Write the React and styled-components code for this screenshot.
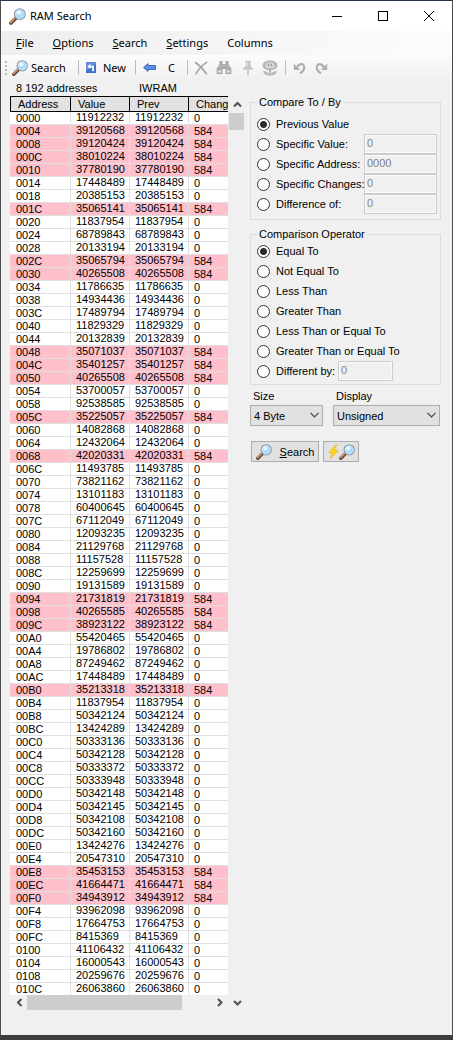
import React, { useState } from "react";
import styled, { createGlobalStyle } from "styled-components";

const GlobalStyle = createGlobalStyle`
  * { box-sizing: border-box; }
  body {
    margin: 0;
    background: #3d3d3d;
    color: #000;
    font: 11px/16px "Liberation Sans", Arial, sans-serif;
  }
  button, input, select { font: inherit; color: inherit; margin: 0; }
`;

const UI_FONT = `"Noto Sans", "Open Sans", sans-serif`;

const Window = styled.main`
  background: #f0f0f0;
  border: 1px solid #4d4d50;
  border-top-color: #26304f;
  border-bottom: 0;
  margin-bottom: 5px;
  min-height: calc(100vh - 5px);
`;

const TitleBar = styled.header`
  display: flex;
  align-items: center;
  height: 30px;
  padding-left: 8px;
  background: #fff;
  font-family: ${UI_FONT};
`;

const Title = styled.h1`
  flex: 1;
  margin: 0 0 0 4px;
  font: inherit;
`;

const CaptionButton = styled.button`
  display: flex;
  align-items: center;
  justify-content: center;
  width: 46px;
  height: 30px;
  padding: 0;
  border: 0;
  background: none;
`;

const MenuBar = styled.nav`
  display: flex;
  align-items: center;
  gap: 3px;
  height: 24px;
  padding-left: 7px;
  background: linear-gradient(90deg, #eeeeee, #fcfcfc);
`;

const MenuItem = styled.button`
  padding: 0 8px;
  border: 0;
  background: none;
  font-family: ${UI_FONT};
`;

const ToolBar = styled.div`
  display: flex;
  align-items: center;
  height: 25px;
  padding-left: 4px;
  background: linear-gradient(#fcfcfc, #f0f0f0);
`;

const Grip = styled.span`
  width: 2px;
  height: 14px;
  margin-right: 5px;
  background: repeating-linear-gradient(#b8b8b8 0 2px, transparent 2px 4px);
`;

const ToolButton = styled.button`
  display: flex;
  align-items: center;
  justify-content: ${(p) => (p.$gap ? "flex-start" : "center")};
  gap: ${(p) => p.$gap || 0}px;
  width: ${(p) => p.$width}px;
  height: 22px;
  padding: 0 0 0 ${(p) => p.$inset || 0}px;
  border: 0;
  background: none;
  font-family: ${UI_FONT};
`;

const Separator = styled.span`
  width: 1px;
  height: 15px;
  margin: 0 3px;
  background: #bdbdbd;
`;

const Body = styled.div`
  display: flex;
  align-items: flex-start;
  padding: 0 11px 25px 9px;
`;

const ListPane = styled.section`
  flex: 1;
  min-width: 0;
`;

const Status = styled.div`
  display: flex;
  height: 16px;
  padding-left: 6px;
`;

const StatusText = styled.span`
  width: ${(p) => p.$width || "auto"};
  white-space: nowrap;
`;

const ListFrame = styled.div`
  display: grid;
  grid-template-columns: minmax(0, 1fr) 16px;
`;

const ListBody = styled.div`
  overflow: hidden;
  margin-right: 1px;
  background: #fff;
`;

const Table = styled.table`
  table-layout: fixed;
  width: 260px;
  border-collapse: separate;
  border-spacing: 0;
`;

const HeadCell = styled.th`
  width: ${(p) => p.$width}px;
  height: 16px;
  padding: 0 0 0 7px;
  border: solid #000;
  border-width: 1px 1px 1px ${(p) => (p.$first ? "1px" : "0")};
  background: #e2e2e2;
  font-weight: normal;
  line-height: 13px;
  text-align: left;
`;

const Row = styled.tr`
  background: ${(p) => (p.$changed ? "#ffc0cb" : "#fff")};
  &:last-child td { height: 12px; border-bottom: 0; }
`;

const Cell = styled.td`
  height: 13px;
  padding: 0 0 0 ${(p) => (p.$wide ? 6 : 5)}px;
  border: solid #dfdfdf;
  border-width: 0 1px 1px 0;
  line-height: ${(p) => (p.$low ? 12 : 10)}px;
  vertical-align: top;
`;

const VerticalBar = styled.div`
  display: flex;
  flex-direction: column;
  align-items: flex-start;
`;

const HorizontalBar = styled.div`
  display: flex;
  align-items: center;
  height: 15px;
  padding: 0 2px 0 1px;
`;

const ScrollArrow = styled.button`
  display: flex;
  align-items: center;
  justify-content: center;
  width: 16px;
  height: ${(p) => p.$height || 15}px;
  padding: 0;
  border: 0;
  background: none;
`;

const Track = styled.div`
  flex: 1;
  width: 15px;
`;

const Thumb = styled.div`
  width: ${(p) => p.$width};
  height: ${(p) => p.$height};
  background: #cdcdcd;
`;

const HorizontalTrack = styled.div`
  flex: 1;
  height: 15px;
`;

const Options = styled.section`
  flex: 0 0 190px;
  margin: 15px 0 0 5px;
`;

const Group = styled.fieldset`
  min-width: 0;
  margin: 0;
  padding: ${(p) => p.$top}px 3px ${(p) => p.$bottom}px 6px;
  border: 1px solid #dcdcdc;
  & + & { margin-top: 7px; }
`;

const Legend = styled.legend`
  height: 14px;
  padding: 0 2px;
  line-height: 14px;
`;

const OptionRow = styled.div`
  display: flex;
  align-items: center;
  height: 20px;
`;

const RadioLabel = styled.label`
  display: flex;
  align-items: center;
  gap: 6px;
  width: ${(p) => p.$width};
  white-space: nowrap;
`;

const Radio = styled.input`
  appearance: none;
  flex: none;
  width: 13px;
  height: 13px;
  border: 1px solid #333;
  border-radius: 50%;
  background: #fff;
  &:checked { background: radial-gradient(circle, #2b2b2b 0 3px, #fff 4px); }
`;

const TextBox = styled.input`
  width: ${(p) => p.$width}px;
  height: 20px;
  padding: 0 2px 2px;
  border: 1px solid #cccccc;
  border-radius: 0;
  background: #f0f0f0;
  color: #838383;
  box-shadow: inset 0 0 0 1px #fafafa;
`;

const Fields = styled.div`
  display: grid;
  grid-template-columns: 73px 107px;
  gap: 10px;
  margin-top: 3px;
`;

const FieldLabel = styled.label`
  display: block;
  height: 17px;
  padding-left: 3px;
`;

const SelectBox = styled.div`
  position: relative;
  svg { position: absolute; right: 4px; top: 7px; pointer-events: none; }
`;

const Select = styled.select`
  appearance: none;
  width: 100%;
  height: 21px;
  padding: 0 3px;
  border: 1px solid #adadad;
  border-radius: 0;
  background: #e1e1e1;
`;

const Actions = styled.div`
  display: flex;
  gap: 4px;
  margin: 15px 0 0 1px;
`;

const ActionButton = styled.button`
  display: flex;
  align-items: center;
  justify-content: center;
  gap: ${(p) => p.$gap || 0}px;
  width: ${(p) => p.$width}px;
  height: 21px;
  padding: 0;
  border: 1px solid #adadad;
  background: #e1e1e1;
`;

const Magnifier = ({ size = 16 }) => (
  <svg width={size} height={size} viewBox="0 0 16 16" aria-hidden="true">
    <path d="M1.8 14.2 6 10" stroke="#5b4a40" strokeWidth="3.4" strokeLinecap="round" />
    <path d="M1.5 13.5 5.400 9.600" stroke="#d39a70" strokeWidth="1.700" strokeLinecap="round" />
    <circle cx="10.2" cy="5.8" r="5" fill="#a9dcfa" stroke="#7f93ad" strokeWidth="1.2" />
    <circle cx="10.2" cy="5.8" r="4.2" fill="none" stroke="#dceaf5" strokeWidth=".8" />
    <ellipse cx="9.2" cy="4.4" rx="2.4" ry="1.8" fill="#e8f8ff" />
  </svg>
);

const Bolt = () => (
  <svg width="11" height="15" viewBox="0 0 11 15" aria-hidden="true">
    <path d="M8.6.6 1 8.4l4 .4L2.4 14.2 10 6.8l-3.8-.6z" fill="#ffe01a" stroke="#f2b705" strokeWidth=".9" />
  </svg>
);

const NewIcon = () => (
  <svg width="10" height="11" viewBox="0 0 10 11" aria-hidden="true">
    <rect width="10" height="11" fill="#3f72cf" />
    <path d="M0 0h10v2L0 9z" fill="#7da4e8" opacity=".5" />
    <path d="M1.400 4.500 4.400 1.800v1.900H8V9.200H6.200V5.500H4.400v1.800z" fill="#fff" />
  </svg>
);

const BackArrow = () => (
  <svg width="13" height="9" viewBox="0 0 13 9" aria-hidden="true">
    <path d="M.6 4.5 5 .6v2h7.4v3.8H5v2z" fill="#5e93ea" stroke="#2c57b0" strokeWidth=".9" />
  </svg>
);

const Cross = () => (
  <svg width="14" height="14" viewBox="0 0 14 14" fill="none" stroke="#a3a3a3" strokeLinecap="round" aria-hidden="true">
    <path d="M1.6 1.6C5 4 9 8.400 12.400 12.800" strokeWidth="1.8" />
    <path d="M12.800 1.200C8.500 4 4.500 8.500 1.800 12.800" strokeWidth="1.5" />
  </svg>
);

const Binoculars = () => (
  <svg width="16" height="15" viewBox="0 0 16 15" aria-hidden="true">
    <path d="M3.500 1h3v3h3V1h3v3l2.800 4.500V14H9.500V9h-3v5H.7V8.500L3.500 4z" fill="#a9a9a9" />
    <path d="M2.500 10.500h2.400v1.800H2.500zM11.100 10.500h2.400v1.800h-2.400zM4.500 5l-1.500 3M11.500 5l1.500 3M7 6h2" fill="#dedede" stroke="#dedede" strokeWidth=".7" />
  </svg>
);

const Pin = () => (
  <svg width="12" height="16" viewBox="0 0 12 16" aria-hidden="true">
    <path d="M3 .8h6.200l-.7 2.200v3l2.500 2.400v1.400H1.200V8.400L3.700 6V3z" fill="#c6c6c6" />
    <path d="M6 9.500V15" stroke="#c4c4c4" strokeWidth="1.600" />
    <path d="M5.200 2v5" stroke="#e4e4e4" />
  </svg>
);

const Flower = () => (
  <svg width="16" height="16" viewBox="0 0 16 16" aria-hidden="true">
    <ellipse cx="8" cy="5.400" rx="7.400" ry="5" fill="#b5b5b5" />
    <ellipse cx="8" cy="5.400" rx="4.800" ry="3.200" fill="#d4d4d4" />
    <path d="M6.500 3.800v2.200M9.500 3.800v2.200" stroke="#8c8c8c" />
    <path d="M8 10v5.500" stroke="#a8a8a8" strokeWidth="1.600" />
    <path d="M7.600 15.500C4 15.500 1.500 14 1 11c3.500 0 6 1.500 6.600 4.500M8.400 15.500C12 15.500 14.500 14 15 11c-3.500 0-6 1.500-6.600 4.500" fill="#b8b8b8" />
  </svg>
);

const Undo = ({ flip }) => (
  <svg width="13" height="14" viewBox="0 0 13 14" aria-hidden="true">
    <g transform={flip ? "matrix(-1 0 0 1 13 0)" : undefined}>
      <path d="M4 6.500C6 2.500 10.800 1.800 11.200 6c.2 2.500-1.600 4.800-4.200 6.400" fill="none" stroke="#b0b0b0" strokeWidth="2.200" />
      <path d="M.8 2.500V9h6.400z" fill="#b0b0b0" />
    </g>
  </svg>
);

const CHEVRONS = {
  up: "M1 6.500 4.500 3 8 6.500",
  down: "M1 3 4.500 6.500 8 3",
  left: "M6.500 1 3 4.500 6.500 8",
  right: "M3 1 6.500 4.500 3 8",
};

const Chevron = ({ dir }) => (
  <svg width="9" height="9" viewBox="0 0 9 9" fill="none" stroke="#505050" strokeWidth="2" aria-hidden="true">
    <path d={CHEVRONS[dir]} />
  </svg>
);

const SelectArrow = () => (
  <svg width="9" height="6" viewBox="0 0 9 6" fill="none" stroke="#444" strokeWidth="1.200" aria-hidden="true">
    <path d="M.5.8 4.500 4.800 8.500.8" />
  </svg>
);

const VALUES = `
11912232 39120568 39120424 38010224 37780190 17448489 20385153 35065141
11837954 68789843 20133194 35065794 40265508 11786635 14934436 17489794
11829329 20132839 35071037 35401257 40265508 53700057 92538585 35225057
14082868 12432064 42020331 11493785 73821162 13101183 60400645 67112049
12093235 21129768 11157528 12259699 19131589 21731819 40265585 38923122
55420465 19786802 87249462 17448489 35213318 11837954 50342124 13424289
50333136 50342128 50333372 50333948 50342148 50342145 50342108 50342160
13424276 20547310 35453153 41664471 34943912 93962098 17664753 8415369
41106432 16000543 20259676 26063860`.trim().split(/\s+/);

const CHANGED = new Set([
  0x04, 0x08, 0x0c, 0x10, 0x1c, 0x2c, 0x30, 0x48, 0x4c, 0x50,
  0x5c, 0x68, 0x94, 0x98, 0x9c, 0xb0, 0xe8, 0xec, 0xf0,
]);

const ROWS = VALUES.map((value, i) => ({
  address: (i * 4).toString(16).toUpperCase().padStart(4, "0"),
  value,
  changed: CHANGED.has(i * 4),
}));

const COMPARE = [
  { name: "Previous Value" },
  { name: "Specific Value:", value: "0" },
  { name: "Specific Address:", value: "0000" },
  { name: "Specific Changes:", value: "0" },
  { name: "Difference of:", value: "0" },
];

const OPERATORS = [
  "Equal To", "Not Equal To", "Less Than", "Greater Than",
  "Less Than or Equal To", "Greater Than or Equal To", "Different by:",
];

const Mnemonic = ({ text }) => (
  <span><u>{text[0]}</u>{text.slice(1)}</span>
);

export default function App() {
  const [compare, setCompare] = useState("Previous Value");
  const [operator, setOperator] = useState("Equal To");

  return (
    <>
      <GlobalStyle />
      <Window>
        <TitleBar>
          <Magnifier size={17} />
          <Title>RAM Search</Title>
          <CaptionButton aria-label="Minimize">
            <svg width="10" height="10" stroke="#000"><path d="M0 5.500h10" /></svg>
          </CaptionButton>
          <CaptionButton aria-label="Maximize">
            <svg width="10" height="10" fill="none" stroke="#000"><rect x=".5" y=".5" width="9" height="9" /></svg>
          </CaptionButton>
          <CaptionButton aria-label="Close">
            <svg width="10" height="10" stroke="#000"><path d="M0 0 10 10M10 0 0 10" /></svg>
          </CaptionButton>
        </TitleBar>

        <MenuBar>
          {["File", "Options", "Search", "Settings"].map((m) => (
            <MenuItem key={m}><Mnemonic text={m} /></MenuItem>
          ))}
          <MenuItem>Columns</MenuItem>
        </MenuBar>

        <ToolBar role="toolbar">
          <Grip />
          <ToolButton $width={63} $gap={3}><Magnifier />Search</ToolButton>
          <Separator />
          <ToolButton $width={50} $gap={7} $inset={4}><NewIcon />New</ToolButton>
          <Separator />
          <ToolButton $width={20} aria-label="Back"><BackArrow /></ToolButton>
          <ToolButton $width={25}>C</ToolButton>
          <Separator />
          <ToolButton $width={20} disabled aria-label="Remove"><Cross /></ToolButton>
          <ToolButton $width={26} disabled aria-label="Watch"><Binoculars /></ToolButton>
          <ToolButton $width={21} disabled aria-label="Freeze"><Pin /></ToolButton>
          <ToolButton $width={24} disabled aria-label="Poke"><Flower /></ToolButton>
          <Separator />
          <ToolButton $width={20} disabled aria-label="Undo"><Undo /></ToolButton>
          <ToolButton $width={24} disabled aria-label="Redo"><Undo flip /></ToolButton>
        </ToolBar>

        <Body>
          <ListPane>
            <Status>
              <StatusText $width="123px">8 192 addresses</StatusText>
              <StatusText>IWRAM</StatusText>
            </Status>
            <ListFrame>
              <ListBody>
                <Table>
                  <thead>
                    <tr>
                      <HeadCell $first $width={61}>Address</HeadCell>
                      <HeadCell $width={59}>Value</HeadCell>
                      <HeadCell $width={59}>Prev</HeadCell>
                      <HeadCell $width={81}>Changes</HeadCell>
                    </tr>
                  </thead>
                  <tbody>
                    {ROWS.map((r) => (
                      <Row key={r.address} $changed={r.changed}>
                        <Cell $low $wide>{r.address}</Cell>
                        <Cell>{r.value}</Cell>
                        <Cell>{r.value}</Cell>
                        <Cell $low>{r.changed ? 584 : 0}</Cell>
                      </Row>
                    ))}
                  </tbody>
                </Table>
              </ListBody>
              <VerticalBar>
                <ScrollArrow $height={17} aria-label="Scroll up"><Chevron dir="up" /></ScrollArrow>
                <Track><Thumb $width="15px" $height="17px" /></Track>
              </VerticalBar>
              <HorizontalBar>
                <ScrollArrow aria-label="Scroll left"><Chevron dir="left" /></ScrollArrow>
                <HorizontalTrack><Thumb $width="84%" $height="15px" /></HorizontalTrack>
                <ScrollArrow aria-label="Scroll right"><Chevron dir="right" /></ScrollArrow>
              </HorizontalBar>
              <ScrollArrow aria-label="Scroll down"><Chevron dir="down" /></ScrollArrow>
            </ListFrame>
          </ListPane>

          <Options>
            <Group $top={5} $bottom={5}>
              <Legend>Compare To / By</Legend>
              {COMPARE.map((o) => (
                <OptionRow key={o.name}>
                  <RadioLabel $width="107px">
                    <Radio type="radio" name="compare" checked={compare === o.name} onChange={() => setCompare(o.name)} />
                    {o.name}
                  </RadioLabel>
                  {o.value && <TextBox $width={73} disabled defaultValue={o.value} aria-label={o.name} />}
                </OptionRow>
              ))}
            </Group>
            <Group $top={0} $bottom={3}>
              <Legend>Comparison Operator</Legend>
              {OPERATORS.map((o) => (
                <OptionRow key={o}>
                  <RadioLabel $width={o === "Different by:" ? "81px" : "auto"}>
                    <Radio type="radio" name="operator" checked={operator === o} onChange={() => setOperator(o)} />
                    {o}
                  </RadioLabel>
                  {o === "Different by:" && <TextBox $width={55} disabled defaultValue="0" aria-label={o} />}
                </OptionRow>
              ))}
            </Group>
            <Fields>
              <div>
                <FieldLabel htmlFor="size">Size</FieldLabel>
                <SelectBox>
                  <Select id="size"><option>4 Byte</option></Select>
                  <SelectArrow />
                </SelectBox>
              </div>
              <div>
                <FieldLabel htmlFor="display">Display</FieldLabel>
                <SelectBox>
                  <Select id="display"><option>Unsigned</option></Select>
                  <SelectArrow />
                </SelectBox>
              </div>
            </Fields>
            <Actions>
              <ActionButton $width={68} $gap={8}><Magnifier /><Mnemonic text="Search" /></ActionButton>
              <ActionButton $width={36} aria-label="Auto search"><Bolt /><Magnifier /></ActionButton>
            </Actions>
          </Options>
        </Body>
      </Window>
    </>
  );
}
